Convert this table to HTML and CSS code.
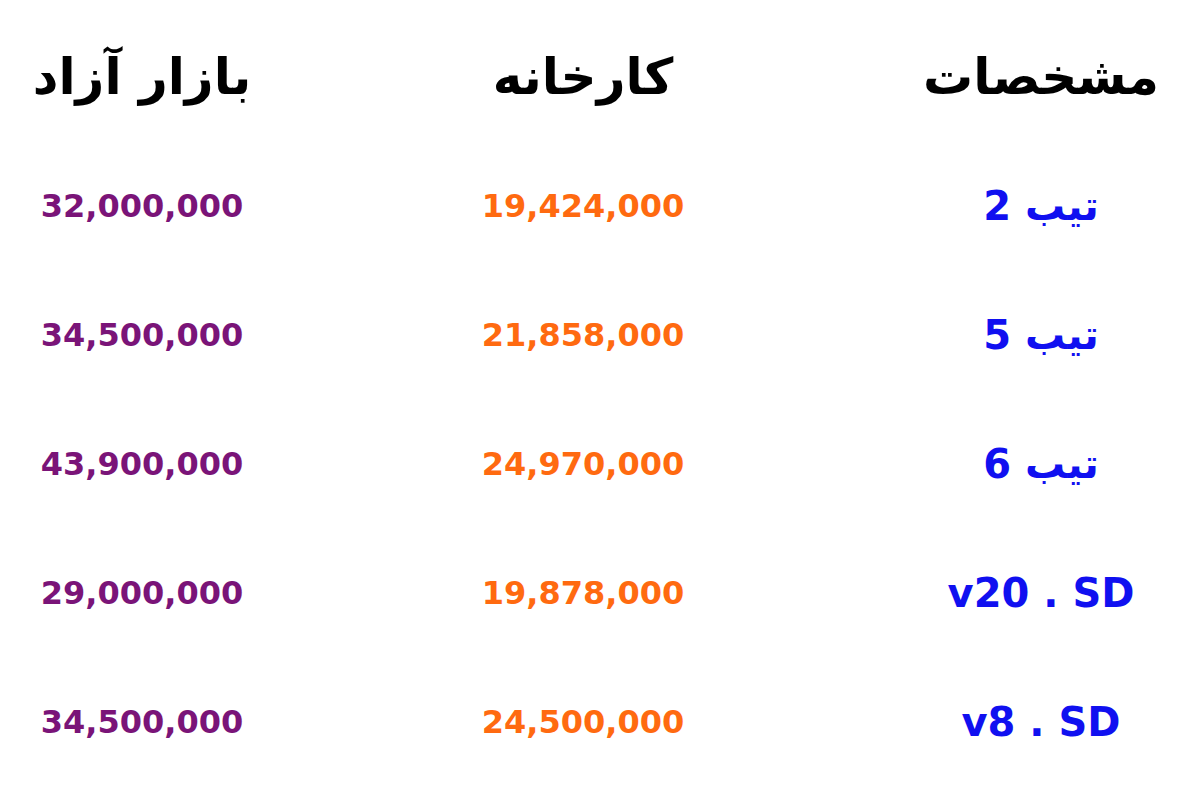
FILE: index.html
```html
<!DOCTYPE html>
<html lang="fa" dir="rtl">
<head>
<meta charset="utf-8">
<link rel="stylesheet" href="styles.css">
</head>
<body>
<div class="price-table">
  <div class="cell head">مشخصات</div>
  <div class="cell head">کارخانه</div>
  <div class="cell head">بازار آزاد</div>

  <div class="cell model">تیب 2</div>
  <div class="cell factory">19,424,000</div>
  <div class="cell market">32,000,000</div>

  <div class="cell model">تیب 5</div>
  <div class="cell factory">21,858,000</div>
  <div class="cell market">34,500,000</div>

  <div class="cell model">تیب 6</div>
  <div class="cell factory">24,970,000</div>
  <div class="cell market">43,900,000</div>

  <div class="cell model latin" dir="ltr">v20 . SD</div>
  <div class="cell factory">19,878,000</div>
  <div class="cell market">29,000,000</div>

  <div class="cell model latin" dir="ltr">v8 . SD</div>
  <div class="cell factory">24,500,000</div>
  <div class="cell market">34,500,000</div>
</div>
</body>
</html>
```
FILE: styles.css
```css
html, body {
  margin: 0;
  padding: 0;
  background: #ffffff;
}
body {
  width: 1200px;
  height: 800px;
  overflow: hidden;
  font-family: "DejaVu Sans", "Liberation Sans", sans-serif;
}
.price-table {
  display: grid;
  grid-template-columns: 318px 598px 284px;
  grid-auto-rows: 129px;
  padding-top: 12px;
}
.cell {
  display: flex;
  align-items: center;
  justify-content: center;
  white-space: nowrap;
}
.head {
  font-size: 50px;
  font-weight: bold;
  color: #000000;
}
.model {
  font-size: 40px;
  font-weight: bold;
  color: #1010f0;
}
.factory {
  font-size: 32px;
  font-weight: bold;
  color: #ff6a10;
}
.market {
  font-size: 32px;
  font-weight: bold;
  color: #7a1478;
}
```
